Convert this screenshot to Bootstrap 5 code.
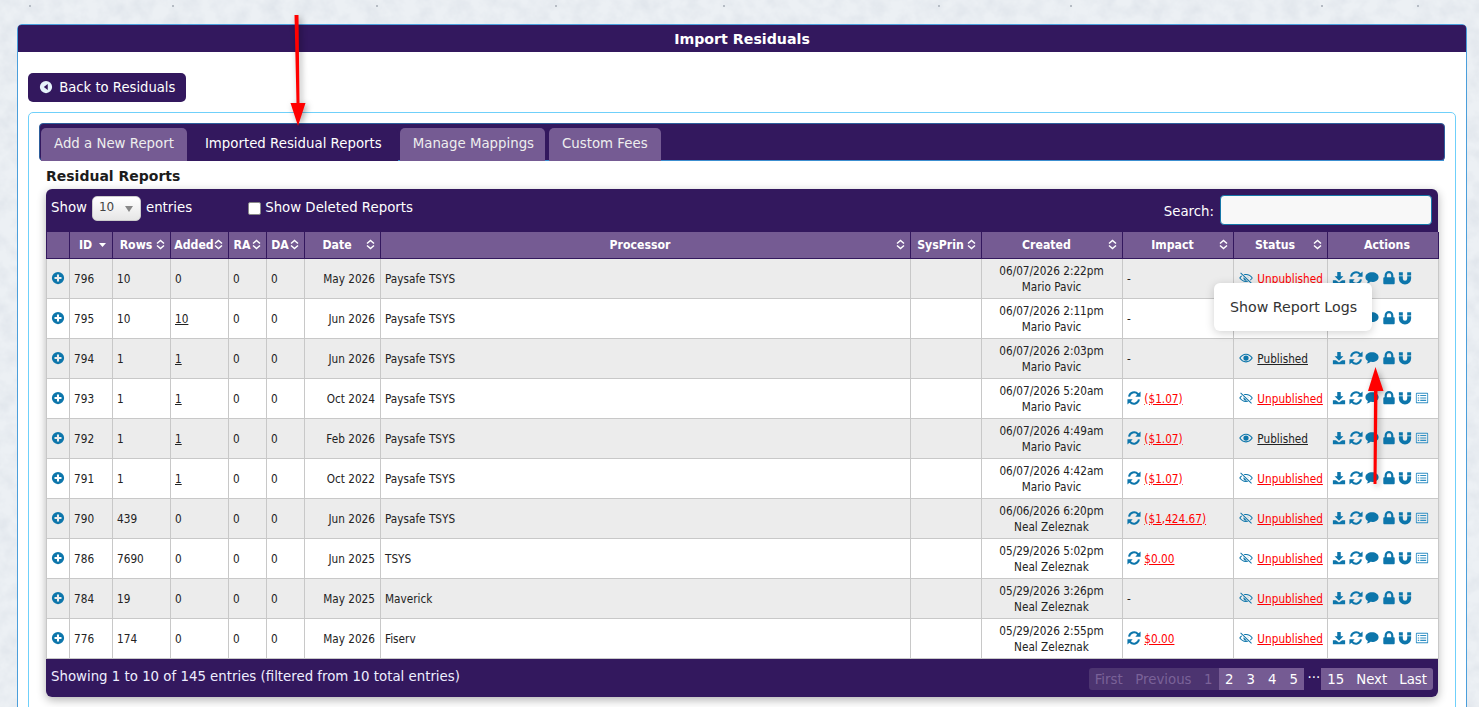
<!DOCTYPE html>
<html lang="en">
<head>
    <meta charset="UTF-8">
    <title>Import Residuals</title>
    <link href="https://cdn.jsdelivr.net/npm/bootstrap@5.3.0/dist/css/bootstrap.min.css" rel="stylesheet">
    <style>
        html, body { height: 707px; overflow: hidden; }
        body {
            position: relative; margin: 0; color: #222; font: 13.33px/1.4 "DejaVu Sans", sans-serif;
            background-color: #ecf0f4;
            background-image: radial-gradient(circle at 30px 6px, #b4bac2 0 1px, transparent 1.5px), radial-gradient(circle at 173px 6px, #b4bac2 0 1px, transparent 1.5px);
            background-size: 347px 137px, 383px 191px;
        }
        .bg-grain { position: absolute; left: 0; top: 0; width: 1479px; height: 707px; z-index: -1; }
        .ico { width: 14px; height: 14px; fill: #0d76ab; vertical-align: -2px; }
        .outer-panel { margin: 24px 12px 0 17px; height: 720px; background: #fff; border: 1px solid #4a9edb; border-radius: 5px 5px 0 0; }
        .outer-title { height: 27px; background: #33185e; color: #fff; font-size: 14.2px; font-weight: 700; text-align: center; line-height: 28px; border-radius: 3px 3px 0 0; }
        .outer-body { padding: 21px 10px 0; }
        .back-btn { width: 158px; height: 29px; padding: 0 0 0 11px; background: #33185e; color: #fff; font-size: 13.2px; border-radius: 5px; border: 0; text-align: left; }
        .back-btn:hover { background: #33185e; color: #fff; }
        .back-btn .ico { fill: #e6f3fb; width: 14px; height: 14px; margin-right: 2px; }
        .inner-panel { margin-top: 10px; height: 620px; padding: 10px; border: 1px solid #6fd0fa; border-radius: 5px 5px 0 0; }
        .tab-bar { height: 38px; padding: 4px 0 0 1px; background: #33185e; border: 1px solid #2d5f9c; border-radius: 4px; }
        .tab-bar .nav-link { height: 33px; margin: 0 4px 0 0; padding: 7px 13px 0; color: #eee; background: #755b93; border: 0; border-radius: 5px 5px 0 0; font-size: 13.33px; }
        .tab-bar .nav-item:first-child .nav-link { margin-right: 0; }
        .tab-bar .nav-item:nth-child(3) .nav-link { padding-right: 11px; }
        .tab-bar .nav-link.active { background: #33185e; color: #fff; padding: 7px 16px 0 18px; margin-right: 2px; }
        .tab-bar .nav-tabs { border-bottom: 1px solid #3c8fd0; height: 33px; }
        .rep-title { margin: 6px 0 3px 7px; font-size: 14px; line-height: 19px; font-weight: 700; color: #1c1c1c; }
        .rep-box { margin: 0 7px; width: 1392px; box-shadow: 0 3px 10px rgba(0,0,0,.3); border-radius: 6px; }
        .rep-top { height: 43px; padding: 6px 6px 0 5px; background: #33185e; color: #fff; border-radius: 6px 6px 0 0; }
        .len-row { margin-top: 1px; }
        .len-select { width: 49px; height: 25px; margin: 0 5px; padding: 3px 0 0 6px; font: 12px "DejaVu Sans", sans-serif; color: #444; border: 1px solid #ccc; border-radius: 5px; background: linear-gradient(#fff, #e6e6e6); position: relative; }
        .len-select::after { content: ""; position: absolute; right: 7px; top: 9px; border: 4px solid transparent; border-top: 6px solid #888; border-bottom: 0; }
        .del-check { width: 13px; height: 13px; margin: 0 4px 0 56px; background: #fff; border: 1px solid #888; border-radius: 2px; }
        .search-in { width: 212px; height: 30px; margin-left: 6px; background: #f8f8f8; border: 1px solid #1677a8; border-radius: 4px; }
        .rep-table { table-layout: fixed; width: 1392px; margin: 0; font: 11.7px/16px "DejaVu Sans Condensed", "DejaVu Sans", sans-serif; color: #222; border-collapse: collapse; }
        .rep-table th { height: 26px; padding: 0 5px 0 3px; background: #755b93; color: #fff; font-size: 12.2px; font-weight: 700; border: 1px solid #33185e; border-width: 0 1px 1px 1px; }
        .rep-table th:last-child { padding-left: 13px; }
        .rep-table td { height: 40px; padding: 1px 5px 0 4px; background: #fff; border: 1px solid #c8c8c8; border-top-width: 0; vertical-align: middle; }
        .rep-table tr.alt td { background: #ececec; }
        .rep-table td.stat-cell { padding-left: 5px; }
        .stat-cell .ico { margin-right: 1px; }
        .th-in { display: flex; align-items: center; }
        .th-in span { flex: 1; text-align: center; white-space: nowrap; }
        .sort-i { flex: none; width: 9px; height: 11px; fill: none; stroke: #fff; stroke-width: 1.5; }
        .u-link { color: #222; text-decoration: underline; }
        .r-link { color: #f00; text-decoration: underline; }
        .act .ico { margin-right: 2.6px; }
        .ico.lite { fill: #2f8fc4; }
        .rep-foot { height: 38px; padding: 9px 5px 0; background: #33185e; color: #eef; border-radius: 0 0 6px 6px; }
        .pager { margin: 0; }
        .pager .page-link { height: 22px; padding: 0 6.5px; font: 13.33px/23px "DejaVu Sans", sans-serif; color: #fff; background: #755b93; border: 0; border-radius: 0; margin-right: 1px; }
        .pager .page-item:first-child .page-link { padding: 0 6px; border-radius: 3px 0 0 3px; }
        .pager .page-item:nth-child(3) .page-link { padding: 0 6px; }
        .pager .page-item:last-child .page-link { margin-right: 0; border-radius: 0 3px 3px 0; }
        .pager .page-item:nth-child(n+9) .page-link { padding: 0 6px; }
        .pager .disabled .page-link { background: #4c3470; color: #7a6298; }
        .pager .p-dots { color: #fff; padding: 0 2px; line-height: 11px; }
        .tip-box { position: absolute; left: 1214px; top: 283px; width: 158px; height: 48px; padding: 15px 0 0 16px; background: #fff; color: #333; font-size: 14.2px; border-radius: 6px; box-shadow: 0 2px 10px rgba(0,0,0,.18); white-space: nowrap; }
        .arrows { position: absolute; left: 0; top: 0; width: 1479px; height: 707px; pointer-events: none; filter: drop-shadow(2px 2px 3px rgba(0,0,0,.35)); }
    </style>
</head>
<body>
    <!-- paper texture behind the page -->
    <svg class="bg-grain" aria-hidden="true">
        <filter id="grain"><feTurbulence type="fractalNoise" baseFrequency=".06" numOctaves="4" seed="7"/><feColorMatrix values="0 0 0 0 .55  0 0 0 0 .6  0 0 0 0 .68  .55 0 0 0 -.2"/></filter>
        <rect width="1479" height="707" filter="url(#grain)"/>
    </svg>

    <!-- icon set -->
    <svg width="0" height="0" class="d-block">
        <symbol id="i-plus" viewBox="0 0 16 16"><path fill-rule="evenodd" d="M8 1a7 7 0 1 1 0 14A7 7 0 0 1 8 1zM6.800 4v2.800H4v2.400h2.800V12h2.400V9.200H12V6.800H9.200V4z"/></symbol>
        <symbol id="i-back" viewBox="0 0 16 16"><path fill-rule="evenodd" d="M8 1a7 7 0 1 1 0 14A7 7 0 0 1 8 1zM10 4.500 5.500 8l4.500 3.500z"/></symbol>
        <symbol id="i-down" viewBox="0 0 16 16"><path d="M6 1h4v5h3L8 11 3 6h3zM1 10.500h3.500L8 13l3.500-2.500H15V15H1z"/></symbol>
        <symbol id="i-sync" viewBox="0 0 16 16"><path d="M15.500 .5v6H9.500l2.100-2.100A4.600 4.600 0 0 0 3.500 6.700L1.200 6.200A7 7 0 0 1 13.300 2.700zM.5 15.500v-6h6l-2.100 2.100a4.600 4.600 0 0 0 8.100-2.300l2.300.5A7 7 0 0 1 2.700 13.300z"/></symbol>
        <symbol id="i-chat" viewBox="0 0 16 16"><path d="M8 1.500c4.100 0 7.500 2.400 7.500 5.500S12.100 12.500 8 12.500c-.6 0-1.200 0-1.700-.1C5 13.600 3.400 14.200 1.800 14.400c.8-.9 1.400-1.900 1.500-3C1.500 10.400.5 8.800.5 7 .5 3.900 3.900 1.500 8 1.500z"/></symbol>
        <symbol id="i-lock" viewBox="0 0 16 16"><path fill-rule="evenodd" d="M3 7V5a5 5 0 0 1 10 0v2h.5c.6 0 1 .4 1 1v6c0 .6-.4 1-1 1h-11c-.6 0-1-.4-1-1V8c0-.6.4-1 1-1zm2.500 0h5V5a2.500 2.500 0 0 0-5 0z"/></symbol>
        <symbol id="i-magnet" viewBox="0 0 16 16"><path d="M1 1.500h4.500v3.500H1zM10.500 1.500H15v3.500h-4.500zM1 6h4.500v2.700a2.500 2.500 0 0 0 5 0V6H15v2.500a7 7 0 0 1-14 0z"/></symbol>
        <symbol id="i-list" viewBox="0 0 16 16"><path fill-rule="evenodd" d="M2 2h12c.6 0 1 .4 1 1v10c0 .6-.4 1-1 1H2c-.6 0-1-.4-1-1V3c0-.6.4-1 1-1zm0 1.200V12.800h12V3.200zM3.200 4.500h1.600v1.300H3.200zm2.800 0h6.800v1.300H6zM3.200 7.300h1.600v1.300H3.200zm2.800 0h6.800v1.300H6zM3.200 10.100h1.600v1.300H3.200zm2.800 0h6.800v1.300H6z"/></symbol>
        <symbol id="i-eye" viewBox="0 0 16 16"><path fill-rule="evenodd" d="M8 3c3.200 0 6 2 7.800 5C14 11 11.200 13 8 13S2 11 .2 8C2 5 4.800 3 8 3zM1.700 8C3.200 10.300 5.400 11.800 8 11.800S12.800 10.300 14.300 8C12.800 5.700 10.600 4.200 8 4.200S3.200 5.700 1.700 8zM8 5a3 3 0 1 1 0 6 3 3 0 0 1 0-6z"/></symbol>
        <symbol id="i-noeye" viewBox="0 0 16 16"><path fill-rule="evenodd" d="M8 3.500c3.200 0 6 1.800 7.800 4.500-.7 1.100-1.600 2.100-2.600 2.800l-.7-.8c.8-.6 1.400-1.200 2-2-1.600-2.200-3.800-3.500-6.500-3.500-.6 0-1.200.1-1.800.2l-.9-.8c.8-.3 1.700-.4 2.700-.4zM2.800 5.200l.7.8C2.800 6.500 2.200 7.200 1.700 8c1.600 2.200 3.800 3.500 6.300 3.500.7 0 1.300-.1 1.900-.3l.9.900c-.9.300-1.800.4-2.800.4-3.200 0-6-1.800-7.800-4.500.7-1.100 1.600-2.100 2.600-2.800zM2.200 1.800l12.500 12-.8.8L1.400 2.600zM5.200 7l3.900 3.800A3 3 0 0 1 5.200 7zM8.300 5l2.700 2.800-.1.300z"/></symbol>
    </svg>

    <div class="outer-panel">
        <div class="outer-title">Import Residuals</div>
        <div class="outer-body">
            <button class="btn back-btn"><svg class="ico"><use href="#i-back"/></svg> Back to Residuals</button>
            <div class="inner-panel">
                <div class="tab-bar">
                    <ul class="nav nav-tabs">
                        <li class="nav-item"><a class="nav-link" href="#">Add a New Report</a></li>
                        <li class="nav-item"><a class="nav-link active" href="#">Imported Residual Reports</a></li>
                        <li class="nav-item"><a class="nav-link" href="#">Manage Mappings</a></li>
                        <li class="nav-item"><a class="nav-link" href="#">Custom Fees</a></li>
                    </ul>
                </div>
                <div class="rep-title">Residual Reports</div>
                <div class="rep-box">
                    <div class="rep-top d-flex align-items-start">
                        <div class="len-row d-flex align-items-center">Show
                            <div class="len-select">10</div> entries
                            <span class="del-check"></span> Show Deleted Reports
                        </div>
                        <div class="d-flex align-items-center ms-auto"><span class="pt-1">Search:</span> <input class="search-in" type="text"></div>
                    </div>
                    <table class="rep-table">
                        <colgroup>
                            <col><col><col><col><col><col><col><col><col><col><col><col><col>
                        </colgroup>
                        <thead id="head"></thead>
                        <tbody id="rows"></tbody>
                    </table>
                    <div class="rep-foot d-flex justify-content-between">
                        <div>Showing 1 to 10 of 145 entries (filtered from 10 total entries)</div>
                        <ul class="pagination pager">
                            <li class="page-item disabled"><a class="page-link" href="#">First</a></li>
                            <li class="page-item disabled"><a class="page-link" href="#">Previous</a></li>
                            <li class="page-item disabled"><a class="page-link" href="#">1</a></li>
                            <li class="page-item"><a class="page-link" href="#">2</a></li>
                            <li class="page-item"><a class="page-link" href="#">3</a></li>
                            <li class="page-item"><a class="page-link" href="#">4</a></li>
                            <li class="page-item"><a class="page-link" href="#">5</a></li>
                            <li class="p-dots">...</li>
                            <li class="page-item"><a class="page-link" href="#">15</a></li>
                            <li class="page-item"><a class="page-link" href="#">Next</a></li>
                            <li class="page-item"><a class="page-link" href="#">Last</a></li>
                        </ul>
                    </div>
                </div>
            </div>
        </div>
    </div>

    <div class="tip-box">Show Report Logs</div>

    <svg class="arrows" viewBox="0 0 1479 707">
        <path fill="#f00" d="M294.500 15h4l1 88h6l-7.500 23-7.500-23h6zM1373.500 484l.5-93h-6l7.500-24 8 24h-6l-1 93z"/>
    </svg>

    <script>
        const widths = [23, 43, 58, 58, 38, 38, 76, 530, 71, 141, 111, 94, 111];
        document.querySelectorAll('col').forEach((c, i) => c.style.width = widths[i] + 'px');

        const icon = (name, cls = '') => `<svg class="ico ${cls}"><use href="#i-${name}"/></svg>`;
        const sorter = '<svg class="sort-i" viewBox="0 0 9 11"><path d="M1 4.500 4.500 1.500 8 4.500M1 6.500 4.500 9.500 8 6.500"/></svg>';

        const heads = ['', 'ID', 'Rows', 'Added', 'RA', 'DA', 'Date', 'Processor', 'SysPrin', 'Created', 'Impact', 'Status', 'Actions'];
        document.getElementById('head').innerHTML = '<tr>' + heads.map((h, i) => {
            let tail = sorter;
            if (i === 0 || i === 12) tail = '';
            if (i === 1) tail = '<svg class="sort-i" viewBox="0 0 9 11"><path fill="#fff" stroke="none" d="M1 4h7L4.500 8z"/></svg>';
            return `<th><div class="th-in"><span>${h}</span>${tail}</div></th>`;
        }).join('') + '</tr>';

        // id, rows, added, date, processor, created, by, impact, published
        const data = [
            [796, 10, 0, 'May 2026', 'Paysafe TSYS', '06/07/2026 2:22pm', 'Mario Pavic', '-', false],
            [795, 10, 10, 'Jun 2026', 'Paysafe TSYS', '06/07/2026 2:11pm', 'Mario Pavic', '-', false],
            [794, 1, 1, 'Jun 2026', 'Paysafe TSYS', '06/07/2026 2:03pm', 'Mario Pavic', '-', true],
            [793, 1, 1, 'Oct 2024', 'Paysafe TSYS', '06/07/2026 5:20am', 'Mario Pavic', '($1.07)', false],
            [792, 1, 1, 'Feb 2026', 'Paysafe TSYS', '06/07/2026 4:49am', 'Mario Pavic', '($1.07)', true],
            [791, 1, 1, 'Oct 2022', 'Paysafe TSYS', '06/07/2026 4:42am', 'Mario Pavic', '($1.07)', false],
            [790, 439, 0, 'Jun 2026', 'Paysafe TSYS', '06/06/2026 6:20pm', 'Neal Zeleznak', '($1,424.67)', false],
            [786, 7690, 0, 'Jun 2025', 'TSYS', '05/29/2026 5:02pm', 'Neal Zeleznak', '$0.00', false],
            [784, 19, 0, 'May 2025', 'Maverick', '05/29/2026 3:26pm', 'Neal Zeleznak', '-', false],
            [776, 174, 0, 'May 2026', 'Fiserv', '05/29/2026 2:55pm', 'Neal Zeleznak', '$0.00', false]
        ];

        document.getElementById('rows').innerHTML = data.map((r, i) => {
            const [id, rows, added, date, proc, created, by, impact, pub] = r;
            const hasImpact = impact !== '-';
            return `<tr class="${i % 2 === 0 ? 'alt' : ''}">
                <td class="text-center px-0">${icon('plus')}</td>
                <td>${id}</td>
                <td>${rows}</td>
                <td>${added ? `<a class="u-link" href="#">${added}</a>` : 0}</td>
                <td>0</td>
                <td>0</td>
                <td class="text-end">${date}</td>
                <td>${proc}</td>
                <td></td>
                <td class="text-center">${created}<br>${by}</td>
                <td>${hasImpact ? `${icon('sync')} <a class="r-link" href="#">${impact}</a>` : '-'}</td>
                <td class="stat-cell text-nowrap">${pub ? `${icon('eye')} <a class="u-link" href="#">Published</a>` : `${icon('noeye')} <a class="r-link" href="#">Unpublished</a>`}</td>
                <td class="act text-nowrap">${icon('down')}${icon('sync')}${icon('chat')}${icon('lock')}${icon('magnet')}${hasImpact ? icon('list', 'lite') : ''}</td>
            </tr>`;
        }).join('');
    </script>
</body>
</html>
